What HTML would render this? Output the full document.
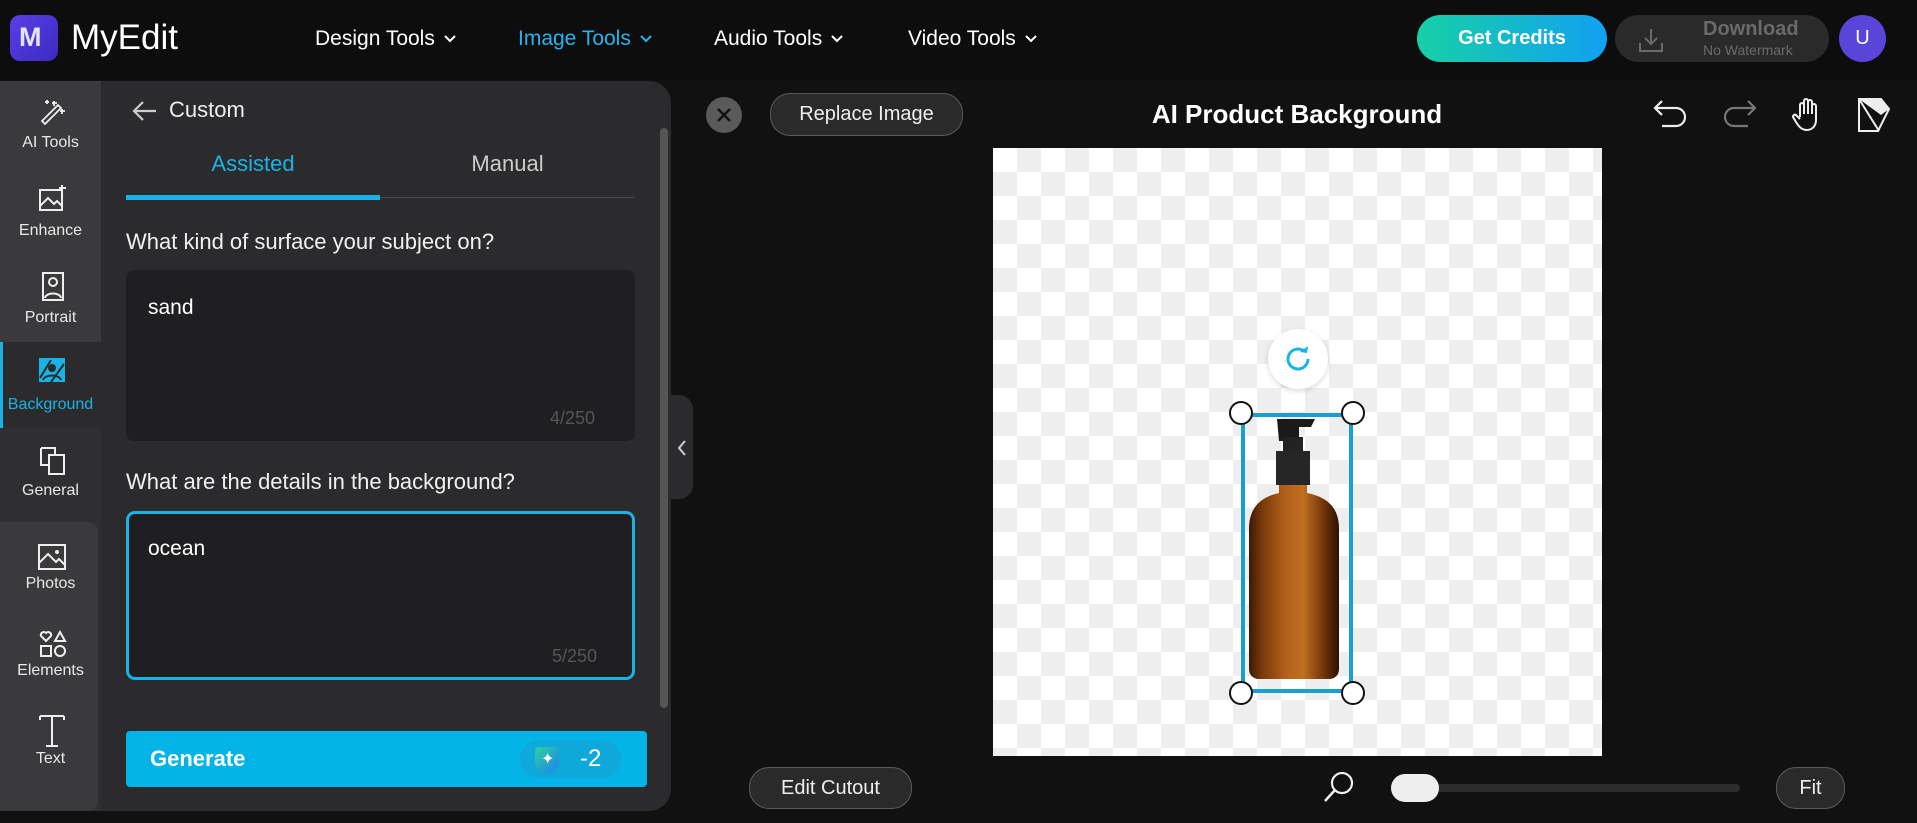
<!DOCTYPE html>
<html><head><meta charset="utf-8"><style>
*{margin:0;padding:0;box-sizing:border-box}
body{width:1917px;height:823px;background:#111112;font-family:"Liberation Sans",sans-serif;color:#fff;position:relative;overflow:hidden}
.abs{position:absolute}
.hdr{left:0;top:0;width:1917px;height:80px;background:#0d0d0e}
.nav{font-size:21px;top:27px;color:#fff}
.nav svg{vertical-align:middle;margin-left:8px}
.panel{left:0;top:81px;width:671px;height:730px;background:#2b2b2d;border-radius:0 22px 22px 0;overflow:hidden}
.icol{left:0;top:0;width:101px;height:730px;background:#2f2f31}
.it{width:101px;text-align:center;font-size:16px;color:#e8e8e8}
.lbl{font-size:22px;color:#f0f0f0}
.ta{background:#1f1f21;border-radius:8px}
.cnt{font-size:18px;color:#555}
.btn{background:#2a2a2a;border:1px solid #5a5a5a;border-radius:20px;font-size:20px;text-align:center;color:#eee}
.chk{left:993px;top:148px;width:609px;height:608px;background-color:#fff;background-image:linear-gradient(45deg,#eeeeee 25%,transparent 25%,transparent 75%,#eeeeee 75%),linear-gradient(45deg,#eeeeee 25%,transparent 25%,transparent 75%,#eeeeee 75%);background-size:48px 48px;background-position:0 0,24px 24px}
.hd{width:24px;height:24px;border-radius:50%;background:#fff;border:2px solid #111}
</style></head><body>
<div class="abs hdr"></div>
<div class="abs" style="left:10px;top:15px;width:48px;height:46px;border-radius:10px;background:linear-gradient(135deg,#5a3ee6,#3a2bc0)"></div>
<div class="abs" style="left:19px;top:22px;font-size:27px;font-weight:bold;color:#e6e2ff">M</div>
<div class="abs" style="left:71px;top:18px;font-size:35px;color:#fff">MyEdit</div>
<div class="abs nav" style="left:315px">Design Tools<svg width="14" height="10"><path d="M2 2l5 5 5-5" stroke="#fff" stroke-width="2" fill="none"/></svg></div>
<div class="abs nav" style="left:518px;color:#27b4ec">Image Tools<svg width="14" height="10"><path d="M2 2l5 5 5-5" stroke="#27b4ec" stroke-width="2" fill="none"/></svg></div>
<div class="abs nav" style="left:714px">Audio Tools<svg width="14" height="10"><path d="M2 2l5 5 5-5" stroke="#fff" stroke-width="2" fill="none"/></svg></div>
<div class="abs nav" style="left:908px">Video Tools<svg width="14" height="10"><path d="M2 2l5 5 5-5" stroke="#fff" stroke-width="2" fill="none"/></svg></div>
<div class="abs" style="left:1417px;top:15px;width:190px;height:47px;border-radius:24px;background:linear-gradient(90deg,#17d0a6,#12a0f2);text-align:center;line-height:47px;font-size:20px;font-weight:bold">Get Credits</div>
<div class="abs" style="left:1615px;top:15px;width:214px;height:47px;border-radius:24px;background:#2a2a2b"></div>
<svg class="abs" style="left:1638px;top:27px" width="26" height="26"><path d="M13 2v15M7 11l6 6 6-6M2 16v8h22v-8" stroke="#6a6a6a" stroke-width="2" fill="none"/></svg>
<div class="abs" style="left:1703px;top:18px;font-size:20px;font-weight:bold;color:#6a6a6a">Download</div>
<div class="abs" style="left:1703px;top:42px;font-size:14px;color:#6a6a6a">No Watermark</div>
<div class="abs" style="left:1839px;top:15px;width:47px;height:47px;border-radius:50%;background:#5b45d8;text-align:center;line-height:47px;font-size:20px">U</div>

<div class="abs panel">
 <div class="abs icol"></div>
 <div class="abs" style="left:0;top:0;width:101px;height:261px;background:#3a3a3c"></div>
 <div class="abs" style="left:0;top:261px;width:101px;height:86px;background:#2b2b2d"></div>
 <div class="abs" style="left:0;top:261px;width:3px;height:86px;background:#1ab3e6"></div>
 <div class="abs" style="left:0;top:441px;width:98px;height:289px;background:#3a3a3c;border-radius:0 10px 10px 0"></div>
 <svg class="abs" style="left:38px;top:16px" width="28" height="28"><path d="M4 24L20 8l3 3L7 27zM16 4v5M14 6h5M24 12v5M22 14h5M9 3v4M7 5h4" stroke="#eee" stroke-width="1.8" fill="none"/></svg>
 <div class="abs it" style="top:53px">AI Tools</div>
 <svg class="abs" style="left:38px;top:103px" width="30" height="30"><rect x="2" y="6" width="22" height="20" stroke="#eee" stroke-width="2" fill="none"/><path d="M2 22l8-8 6 6 3-3 5 5M24 1v7M21 4h7" stroke="#eee" stroke-width="2" fill="none"/></svg>
 <div class="abs it" style="top:141px">Enhance</div>
 <svg class="abs" style="left:38px;top:189px" width="30" height="32"><rect x="5" y="3" width="20" height="27" stroke="#eee" stroke-width="2" fill="none"/><circle cx="15" cy="12" r="4" stroke="#eee" stroke-width="2" fill="none"/><path d="M7 28c1-6 15-6 16 0" stroke="#eee" stroke-width="2" fill="none"/></svg>
 <div class="abs it" style="top:228px">Portrait</div>
 <svg class="abs" style="left:37px;top:275px" width="30" height="30"><rect x="2" y="2" width="26" height="24" fill="#1ab3e6"/><circle cx="15" cy="12" r="4" fill="#2b2b2d"/><path d="M6 24c2-6 16-6 18 0M3 22L14 4M14 26L27 8" stroke="#2b2b2d" stroke-width="2" fill="none"/></svg>
 <div class="abs it" style="top:315px;color:#1ab3e6">Background</div>
 <svg class="abs" style="left:38px;top:364px" width="30" height="32"><path d="M3 3h14v7M3 3v17h7" stroke="#eee" stroke-width="2" fill="none"/><rect x="11" y="10" width="15" height="19" stroke="#eee" stroke-width="2" fill="none"/></svg>
 <div class="abs it" style="top:401px">General</div>
 <svg class="abs" style="left:37px;top:462px" width="30" height="30"><rect x="2" y="2" width="26" height="24" stroke="#eee" stroke-width="2" fill="none"/><path d="M2 20l9-9 8 8 3-3 6 6" stroke="#eee" stroke-width="2" fill="none"/><circle cx="20" cy="9" r="2" fill="#eee"/></svg>
 <div class="abs it" style="top:494px">Photos</div>
 <svg class="abs" style="left:38px;top:548px" width="30" height="30"><path d="M8 12L3 7a3 3 0 015-3 3 3 0 015 3z M22 3l5 9h-10z" stroke="#eee" stroke-width="2" fill="none"/><rect x="3" y="17" width="10" height="10" stroke="#eee" stroke-width="2" fill="none"/><circle cx="22" cy="22" r="5" stroke="#eee" stroke-width="2" fill="none"/></svg>
 <div class="abs it" style="top:581px">Elements</div>
 <svg class="abs" style="left:38px;top:632px" width="28" height="36"><path d="M2 3h24M14 3v30M8 33h12M2 3v4M26 3v4" stroke="#eee" stroke-width="2" fill="none"/></svg>
 <div class="abs it" style="top:669px">Text</div>

 <svg class="abs" style="left:130px;top:18px" width="28" height="24"><path d="M26 12H4M13 3l-9 9 9 9" stroke="#ccc" stroke-width="2.2" fill="none"/></svg>
 <div class="abs" style="left:169px;top:16px;font-size:22px;color:#eee">Custom</div>
 <div class="abs" style="left:126px;top:70px;width:254px;text-align:center;font-size:22px;color:#1ab3e6">Assisted</div>
 <div class="abs" style="left:380px;top:70px;width:255px;text-align:center;font-size:22px;color:#ccc">Manual</div>
 <div class="abs" style="left:126px;top:116px;width:509px;height:1px;background:#4a4a4c"></div>
 <div class="abs" style="left:126px;top:114px;width:254px;height:5px;background:#1ab3e6"></div>
 <div class="abs lbl" style="left:126px;top:148px">What kind of surface your subject on?</div>
 <div class="abs ta" style="left:126px;top:189px;width:509px;height:171px"></div>
 <div class="abs" style="left:148px;top:215px;font-size:21px">sand</div>
 <div class="abs cnt" style="left:550px;top:327px">4/250</div>
 <div class="abs lbl" style="left:126px;top:388px">What are the details in the background?</div>
 <div class="abs ta" style="left:126px;top:430px;width:509px;height:169px;border:3px solid #1ab3e6;border-radius:9px"></div>
 <div class="abs" style="left:148px;top:456px;font-size:21px">ocean</div>
 <div class="abs cnt" style="left:552px;top:565px">5/250</div>
 <div class="abs" style="left:660px;top:47px;width:8px;height:580px;border-radius:4px;background:#555"></div>
 <div class="abs" style="left:126px;top:650px;width:521px;height:56px;background:#04b3e8;border-radius:4px"></div>
 <div class="abs" style="left:150px;top:665px;font-size:22px;font-weight:bold">Generate</div>
 <div class="abs" style="left:520px;top:659px;width:101px;height:38px;border-radius:19px;background:#0fa8da"></div>
 <div class="abs" style="left:535px;top:666px;width:24px;height:26px;border-radius:4px 4px 12px 12px;background:linear-gradient(135deg,#2ed1a0,#1e80f0)"></div>
 <div class="abs" style="left:541px;top:668px;font-size:16px;color:#fff">✦</div>
 <div class="abs" style="left:580px;top:664px;font-size:24px">-2</div>
</div>
<div class="abs" style="left:671px;top:395px;width:22px;height:104px;background:#2b2b2d;border-radius:0 14px 14px 0"></div>
<svg class="abs" style="left:676px;top:439px" width="12" height="18"><path d="M9 2L3 9l6 7" stroke="#ccc" stroke-width="2" fill="none"/></svg>

<div class="abs" style="left:706px;top:97px;width:36px;height:36px;border-radius:50%;background:#5a5a5a"></div>
<svg class="abs" style="left:715px;top:106px" width="18" height="18"><path d="M3 3l12 12M15 3L3 15" stroke="#111" stroke-width="2.5"/></svg>
<div class="abs btn" style="left:770px;top:93px;width:193px;height:43px;line-height:41px">Replace Image</div>
<div class="abs" style="left:1097px;top:99px;width:400px;text-align:center;font-size:26px;font-weight:bold">AI Product Background</div>
<svg class="abs" style="left:1652px;top:98px" width="38" height="34"><path d="M4 10h20a9 9 0 010 18H10M10 3L3 10l7 7" stroke="#eee" stroke-width="2.2" fill="none"/></svg>
<svg class="abs" style="left:1720px;top:98px" width="38" height="34"><path d="M34 10H14a9 9 0 000 18h14M28 3l7 7-7 7" stroke="#777" stroke-width="2.2" fill="none"/></svg>
<svg class="abs" style="left:1792px;top:97px" width="30" height="36"><path d="M8 20V8a2 2 0 014 0v9V4a2 2 0 014 0v13V5a2 2 0 014 0v12V9a2 2 0 014 0v14c0 6-4 10-9 10s-8-3-11-8l-3-5a2 2 0 013-2l4 4" stroke="#eee" stroke-width="2" fill="none"/></svg>
<svg class="abs" style="left:1857px;top:97px" width="34" height="36"><path d="M2 2h22l8 10-11 22H2z" stroke="#eee" stroke-width="2" fill="none"/><path d="M2 2l20 32" stroke="#eee" stroke-width="2"/><path d="M2 2h22l8 10-8 6z" fill="#eee"/></svg>

<div class="abs chk"></div>
<div class="abs" style="left:1268px;top:329px;width:60px;height:60px;border-radius:50%;background:#fff;box-shadow:0 2px 6px rgba(0,0,0,.15)"></div>
<svg class="abs" style="left:1282px;top:343px" width="32" height="32"><path d="M26 16a10 10 0 11-4-8" stroke="#1ab3e6" stroke-width="3" fill="none"/><path d="M18 9l7 1 1-7z" fill="#1ab3e6"/></svg>
<svg class="abs" style="left:1245px;top:415px" width="106" height="276">
 <defs><linearGradient id="am" x1="0" x2="1"><stop offset="0" stop-color="#3a1a05"/><stop offset=".15" stop-color="#7a3a0a"/><stop offset=".4" stop-color="#b0601a"/><stop offset=".6" stop-color="#c07020"/><stop offset=".85" stop-color="#6a3008"/><stop offset="1" stop-color="#2a1204"/></linearGradient></defs>
 <path d="M32 4h38l-4 8H54v14H34z" fill="#1a1a1a"/>
 <rect x="38" y="22" width="20" height="16" fill="#222"/>
 <rect x="31" y="36" width="34" height="34" fill="#262626"/>
 <path d="M34 70h28v8c20 4 32 14 32 36v140c0 6-4 10-10 10H14c-6 0-10-4-10-10V114c0-22 12-32 30-36z" fill="url(#am)"/>
</svg>
<div class="abs" style="left:1241px;top:413px;width:112px;height:280px;border:4px solid #1a9fcf"></div>
<div class="abs hd" style="left:1229px;top:401px"></div>
<div class="abs hd" style="left:1341px;top:401px"></div>
<div class="abs hd" style="left:1229px;top:681px"></div>
<div class="abs hd" style="left:1341px;top:681px"></div>

<div class="abs btn" style="left:749px;top:767px;width:163px;height:42px;line-height:40px">Edit Cutout</div>
<svg class="abs" style="left:1322px;top:770px" width="34" height="34"><circle cx="20" cy="13" r="10" stroke="#eee" stroke-width="2.2" fill="none"/><path d="M13 20L3 31" stroke="#eee" stroke-width="2.5"/></svg>
<div class="abs" style="left:1391px;top:784px;width:349px;height:8px;border-radius:4px;background:#2c2c2c"></div>
<div class="abs" style="left:1391px;top:774px;width:48px;height:28px;border-radius:14px;background:#eee"></div>
<div class="abs btn" style="left:1776px;top:767px;width:69px;height:42px;line-height:40px">Fit</div>
</body></html>
